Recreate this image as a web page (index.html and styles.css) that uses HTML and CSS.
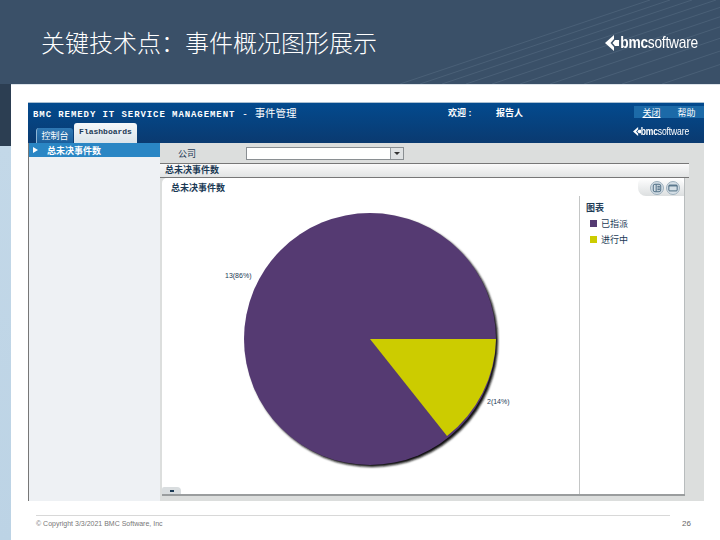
FILE: index.html
```html
<!DOCTYPE html>
<html lang="zh-CN">
<head>
    <meta charset="UTF-8">
    <title>关键技术点：事件概况图形展示</title>
    <link rel="stylesheet" href="styles.css">
</head>
<body>

<div class="slide">
    <header class="slide-head">
        <svg class="head-lines" width="320" height="84" viewBox="0 0 320 84">
            <g stroke="#5d7389" stroke-width="1" opacity="0.45">
                <line x1="0" y1="84" x2="250" y2="0"/>
                <line x1="20" y1="84" x2="270" y2="0"/>
                <line x1="42" y1="84" x2="292" y2="0"/>
                <line x1="66" y1="84" x2="316" y2="0"/>
                <line x1="92" y1="84" x2="342" y2="0"/>
                <line x1="120" y1="84" x2="370" y2="0"/>
                <line x1="150" y1="84" x2="400" y2="0"/>
                <line x1="184" y1="84" x2="434" y2="0"/>
                <line x1="222" y1="84" x2="472" y2="0"/>
                <line x1="262" y1="84" x2="512" y2="0"/>
            </g>
        </svg>
        <h1 class="slide-title">关键技术点：事件概况图形展示</h1>
        <div class="logo logo-big">
            <svg width="14" height="18" viewBox="0 0 14 18"><path d="M9 1 L0 9 L9 17 L9 13 L5.5 9 L9 5 Z M10 6 h4 v6 h-4 l-2.5 -3 Z" fill="#fff"/></svg>
            <span class="logo-text"><b>bmc</b>software</span>
        </div>
    </header>

    <div class="slide-body">
        <div class="edge"></div>
        <div class="sheet">
            <div class="app">
                <div class="app-top">
                    <div class="top-row">
                        <div class="app-name"><span class="app-latin">BMC REMEDY IT SERVICE MANAGEMENT</span> <span class="app-dash">-</span> <span class="app-cn">事件管理</span></div>
                        <div class="welcome">欢迎 :</div>
                        <div class="user">报告人</div>
                        <div class="top-links"><a class="active">关闭</a><a>帮助</a></div>
                    </div>
                    <div class="tab-row">
                        <div class="tab tab-off">控制台</div>
                        <div class="tab tab-on">Flashboards</div>
                        <div class="logo logo-small">
                            <svg width="8" height="11" viewBox="0 0 14 18"><path d="M9 1 L0 9 L9 17 L9 13 L5.5 9 L9 5 Z M10 6 h4 v6 h-4 l-2.5 -3 Z" fill="#fff"/></svg>
                            <span class="logo-text"><b>bmc</b>software</span>
                        </div>
                    </div>
                </div>

                <div class="app-main">
                    <aside class="side">
                        <div class="side-item"><span class="side-arrow"></span>总未决事件数</div>
                    </aside>
                    <div class="content">
                        <div class="filter">
                            <span class="filter-label">公司</span>
                            <div class="select"><span class="select-btn"></span></div>
                        </div>
                        <div class="section-bar">总未决事件数</div>
                        <div class="card">
                            <div class="card-head">
                                <div class="card-title">总未决事件数</div>
                                <div class="card-tools">
                                    <span class="round-btn">
                                        <svg viewBox="0 0 12 12"><rect x="1.5" y="1.5" width="9" height="9" rx="2" fill="none" stroke="#33566f"/><path d="M5 2v8M6.5 4h3M6.5 6h3M6.5 8h3" stroke="#33566f"/></svg>
                                    </span>
                                    <span class="round-btn">
                                        <svg viewBox="0 0 12 12"><rect x="1" y="2.5" width="10" height="7" rx="1" fill="none" stroke="#33566f"/><path d="M1 3.5h10" stroke="#33566f"/></svg>
                                    </span>
                                </div>
                            </div>
                            <div class="card-body">
                                <div class="chart">
                                    <svg class="pie" width="264" height="264" viewBox="0 0 264 264">
                                        <defs>
                                            <filter id="soft" x="-10%" y="-10%" width="120%" height="120%">
                                                <feGaussianBlur stdDeviation="1.3"/>
                                            </filter>
                                        </defs>
                                        <circle cx="128" cy="128" r="126" fill="#111" filter="url(#soft)"/>
                                        <circle cx="126" cy="126" r="126" fill="#553a72"/>
                                        <path d="M126 126 L252 126 A126 126 0 0 1 203 223 Z" fill="#cccc00"/>
                                    </svg>
                                    <span class="pie-label label-a">13(86%)</span>
                                    <span class="pie-label label-b">2(14%)</span>
                                </div>
                                <div class="legend">
                                    <div class="legend-title">图表</div>
                                    <div class="legend-row"><span class="swatch swatch-purple"></span>已指派</div>
                                    <div class="legend-row"><span class="swatch swatch-yellow"></span>进行中</div>
                                </div>
                            </div>
                            <span class="collapse-tab"><i></i></span>
                        </div>
                    </div>
                </div>
            </div>

            <footer class="slide-foot">
                <span class="copy">© Copyright 3/3/2021 BMC Software, Inc</span>
                <span class="page-no">26</span>
            </footer>
        </div>
    </div>
</div>

</body>
</html>
```

FILE: styles.css
```css
html, body {
    margin: 0;
    padding: 0;
    background-color: #fff;
    font-family: "Liberation Sans", "Noto Sans CJK SC", sans-serif;
    overflow: hidden;
}
.slide {
    width: 720px;
    height: 540px;
    display: flex;
    flex-direction: column;
}

/* slide header */
.slide-head {
    position: relative;
    height: 84px;
    flex: none;
    display: flex;
    align-items: flex-start;
    justify-content: space-between;
    background-color: #3a5068;
    overflow: hidden;
}
.head-lines {
    position: absolute;
    right: 0;
    top: 0;
}
.slide-title {
    position: relative;
    margin: 25px 0 0 41px;
    font-size: 24px;
    line-height: 34px;
    font-weight: 300;
    color: #fff;
    font-family: "Noto Sans CJK SC", sans-serif;
}
.logo {
    position: relative;
    display: flex;
    align-items: center;
    color: #fff;
}
.logo-text {
    font-family: "Liberation Sans", sans-serif;
    transform-origin: right center;
}
.logo-text b {
    font-weight: 700;
}
.logo-big {
    margin: 33px 22px 0 0;
}
.logo-big svg {
    margin-right: -17px;
}
.logo-big .logo-text {
    font-size: 17px;
    line-height: 20px;
    letter-spacing: -0.3px;
    transform: scaleX(0.81);
}

/* slide body */
.slide-body {
    flex: 1;
    display: flex;
    min-height: 0;
}
.edge {
    width: 11px;
    flex: none;
    background: linear-gradient(#2c3e52 0, #2c3e52 62px, #c3d8e8 62px, #bcd3e5 100%);
}
.sheet {
    flex: 1;
    background-color: #fff;
    border-top: 1px solid #dde4ea;
    padding: 17px 16px 0 17px;
    display: flex;
    flex-direction: column;
}

/* captured app */
.app {
    height: 399px;
    display: flex;
    flex-direction: column;
}
.app-top {
    height: 41px;
    flex: none;
    box-sizing: border-box;
    border-top: 1px solid #a9bfd2;
    background: linear-gradient(#034a8e, #0a3a70);
    color: #fff;
    display: flex;
    flex-direction: column;
}
.top-row {
    height: 18px;
    display: flex;
    align-items: center;
    padding-left: 5px;
    font-size: 9px;
    font-weight: 700;
}
.app-name {
    width: 415px;
    white-space: nowrap;
    font-size: 10.5px;
    font-weight: 400;
}
.app-latin {
    font-family: "Liberation Mono", monospace;
    font-size: 9px;
    font-weight: 700;
    letter-spacing: 0.92px;
}
.app-dash {
    margin: 0 5px;
}
.welcome {
    width: 48px;
}
.user {
    width: 138px;
}
.top-links {
    width: 70px;
    height: 12px;
    background-color: #1c6aa8;
    display: flex;
    align-items: center;
    justify-content: space-around;
    font-weight: 400;
    font-size: 9px;
}
.top-links .active {
    text-decoration: underline;
}
.tab-row {
    flex: 1;
    display: flex;
    align-items: flex-end;
    padding-left: 8px;
}
.tab {
    font-size: 9px;
    box-sizing: border-box;
    border-radius: 3px 3px 0 0;
    text-align: center;
}
.tab-off {
    width: 37px;
    height: 15px;
    line-height: 16px;
    background: linear-gradient(#2f78b4, #1c5f9c);
    border-left: 1px solid #8fb6d6;
}
.tab-on {
    width: 63px;
    height: 20px;
    margin-left: 1px;
    line-height: 18px;
    background: linear-gradient(#f6f8fa, #dbe4ea);
    color: #1c3a55;
    font-family: "Liberation Mono", monospace;
    font-size: 8px;
    font-weight: 700;
}
.logo-small {
    margin-left: auto;
    margin-right: 15px;
    margin-bottom: 5px;
}
.logo-small svg {
    margin-right: -14px;
}
.logo-small .logo-text {
    font-size: 11px;
    line-height: 14px;
    letter-spacing: -0.2px;
    transform: scaleX(0.78);
}
.app-main {
    flex: 1;
    display: flex;
    min-height: 0;
}
.side {
    width: 132px;
    flex: none;
    box-sizing: border-box;
    background-color: #eef1f4;
    border-left: 1px solid #777;
}
.side-item {
    height: 14px;
    display: flex;
    align-items: center;
    background-color: #2a86c4;
    color: #fff;
    font-size: 9px;
    font-weight: 700;
}
.side-arrow {
    width: 0;
    height: 0;
    margin: 0 9px 0 4px;
    border-left: 5px solid #fff;
    border-top: 3px solid transparent;
    border-bottom: 3px solid transparent;
}
.content {
    flex: 1;
    min-width: 0;
    display: flex;
    flex-direction: column;
    background-color: #dcdedd;
}
.filter {
    height: 20px;
    flex: none;
    display: flex;
    align-items: center;
    color: #1c3a55;
    font-size: 9px;
}
.filter-label {
    width: 86px;
    padding-left: 18px;
    box-sizing: border-box;
}
.select {
    width: 158px;
    height: 13px;
    box-sizing: border-box;
    background-color: #fff;
    border: 1px solid #8a8f92;
    display: flex;
    justify-content: flex-end;
}
.select-btn {
    width: 12px;
    position: relative;
    background-color: #dfe2e3;
    border-left: 1px solid #9aa0a3;
}
.select-btn::after {
    content: "";
    position: absolute;
    left: 3px;
    top: 4px;
    border-top: 3px solid #333;
    border-left: 3px solid transparent;
    border-right: 3px solid transparent;
}
.section-bar {
    height: 15px;
    flex: none;
    width: 529px;
    box-sizing: border-box;
    border-top: 1px solid #777;
    border-bottom: 1px solid #777;
    background: linear-gradient(#fafafa, #e2e4e4);
    color: #1c3a55;
    font-size: 9px;
    font-weight: 700;
    line-height: 13px;
    padding-left: 5px;
}
.card {
    position: relative;
    margin: 0 0 7px 2px;
    width: 523px;
    flex: 1;
    min-height: 0;
    display: flex;
    flex-direction: column;
    box-sizing: border-box;
    background-color: #fff;
    border-right: 1px solid #b8bcbd;
    border-radius: 5px 0 0 0;
    box-shadow: 0 2px 0 #9a9d9e;
}
.card-head {
    height: 18px;
    flex: none;
    display: flex;
    justify-content: space-between;
}
.card-title {
    padding: 4px 0 0 9px;
    color: #1c3a55;
    font-size: 9px;
    font-weight: 700;
    line-height: 13px;
}
.card-tools {
    width: 46px;
    box-sizing: border-box;
    padding: 2px 4px 0 0;
    display: flex;
    align-items: center;
    justify-content: flex-end;
    gap: 2px;
    background: linear-gradient(#fff, #dcdfe0);
    border-radius: 6px 8px 0 8px;
}
.round-btn {
    width: 14px;
    height: 14px;
    box-sizing: border-box;
    border: 1px solid #9db0bd;
    border-radius: 50%;
    background-color: #d5dfe6;
    display: flex;
    align-items: center;
    justify-content: center;
}
.round-btn svg {
    width: 10px;
    height: 10px;
}
.card-body {
    flex: 1;
    min-height: 0;
    display: flex;
}
.chart {
    position: relative;
    width: 418px;
    flex: none;
    box-sizing: border-box;
    border-right: 1px solid #c4c6c6;
}
.pie {
    display: block;
    margin: 17px 0 0 82px;
}
.pie-label {
    position: absolute;
    color: #1c3a55;
    font-size: 7px;
    line-height: 9px;
}
.label-a {
    left: 63px;
    top: 75px;
}
.label-b {
    left: 325px;
    top: 201px;
}
.legend {
    flex: 1;
    padding: 6px 0 0 6px;
    color: #1c3a55;
    font-size: 9px;
    font-weight: 700;
}
.legend-title {
    line-height: 12px;
    margin-bottom: 1px;
}
.legend-row {
    display: flex;
    align-items: center;
    height: 16px;
    padding-left: 4px;
    font-weight: 400;
}
.swatch {
    width: 7px;
    height: 7px;
    margin-right: 4px;
}
.swatch-purple {
    background-color: #553a72;
}
.swatch-yellow {
    background-color: #cccc00;
}
.collapse-tab {
    position: absolute;
    left: 0;
    bottom: 0;
    width: 19px;
    height: 7px;
    background-color: #d9dddf;
    border-radius: 2px 4px 0 0;
    display: flex;
    align-items: center;
    justify-content: center;
}
.collapse-tab i {
    width: 4px;
    height: 2px;
    background-color: #1c3a55;
}

/* slide footer */
.slide-foot {
    margin: 14px 0 0 8px;
    padding-top: 3px;
    border-top: 1px solid #d8d8d8;
    width: 634px;
    display: flex;
    justify-content: space-between;
    font-size: 7px;
    letter-spacing: 0;
    line-height: 10px;
    color: #777;
    white-space: nowrap;
}
.page-no {
    position: relative;
    left: 21px;
    font-size: 8px;
    color: #666;
}
```
